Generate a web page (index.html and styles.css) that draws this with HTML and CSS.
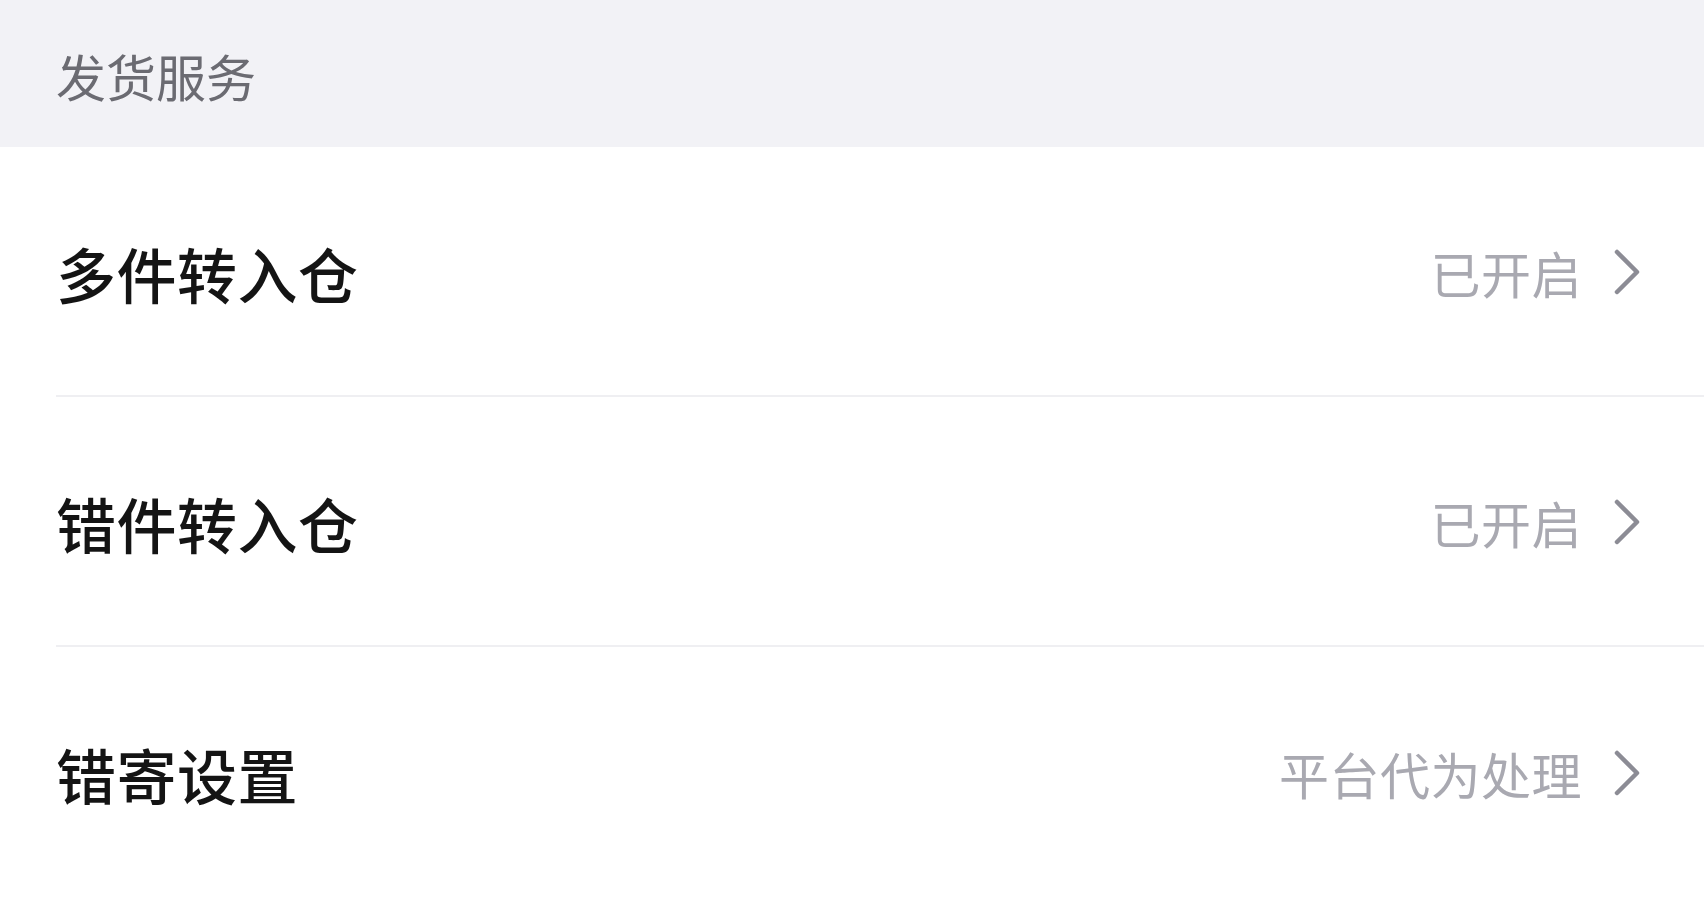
FILE: index.html
```html
<!DOCTYPE html>
<html lang="zh-CN">
<head>
  <meta charset="UTF-8" />
  <meta name="viewport" content="width=device-width, initial-scale=1.0" />
  <title>发货服务</title>
  <link rel="stylesheet" href="styles.css">
</head>
<body>
  <div class="baslik">发货服务</div>

  <div class="liste">
    <div class="satir">
      <span class="ad">多件转入仓</span>
      <span class="deger">已开启
        <svg class="ok" viewBox="0 0 26 46"><path d="M3 3 L23 23 L3 43" /></svg>
      </span>
    </div>
    <div class="satir">
      <span class="ad">错件转入仓</span>
      <span class="deger">已开启
        <svg class="ok" viewBox="0 0 26 46"><path d="M3 3 L23 23 L3 43" /></svg>
      </span>
    </div>
    <div class="satir">
      <span class="ad">错寄设置</span>
      <span class="deger">平台代为处理
        <svg class="ok" viewBox="0 0 26 46"><path d="M3 3 L23 23 L3 43" /></svg>
      </span>
    </div>
  </div>
</body>
</html>
```

FILE: styles.css
```css
* {
  margin: 0;
  padding: 0;
  box-sizing: border-box;
}

body {
  font-family: "Noto Sans CJK SC", "Noto Sans", sans-serif;
  background: #fff;
  color: #111;
  overflow: hidden;
}

/* Üst gri başlık */
.baslik {
  height: 147px;
  background: #f2f2f6;
  color: #6b6b72;
  font-size: 50px;
  display: flex;
  align-items: center;
  padding-left: 56px;
  padding-top: 2px;
}

.liste {
  padding-left: 56px;
}

.satir {
  height: 250px;
  display: flex;
  align-items: center;
  justify-content: space-between;
  padding-right: 64px;
  padding-top: 2px;
  border-bottom: 2px solid #efeff2;
}

.satir:last-child {
  border-bottom: none;
}

.ad {
  font-size: 60px;
  font-weight: 500;
  color: #141414;
  letter-spacing: 0.5px;
}

.deger {
  display: flex;
  align-items: center;
  gap: 32px;
  font-size: 50px;
  letter-spacing: 0.5px;
  color: #a9a9b1;
}

.ok {
  width: 26px;
  height: 46px;
  fill: none;
  stroke: #8c8c95;
  stroke-width: 4.5;
  stroke-linecap: round;
  stroke-linejoin: round;
}
```
